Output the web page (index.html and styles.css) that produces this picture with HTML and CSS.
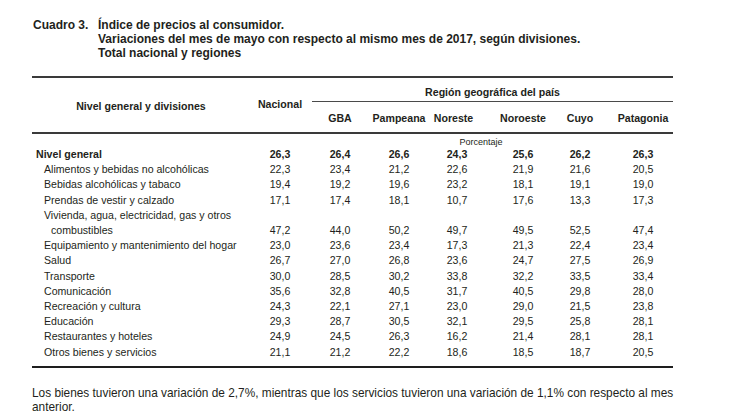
FILE: index.html
```html
<!DOCTYPE html>
<html lang="es">
<head>
<meta charset="utf-8">
<title>Cuadro 3</title>
<link rel="stylesheet" href="styles.css">
</head>
<body>
<div class="page">
  <div class="title">
    <div class="title-num">Cuadro 3.</div>
    <div class="title-lines">
      <div>Índice de precios al consumidor.</div>
      <div>Variaciones del mes de mayo con respecto al mismo mes de 2017, según divisiones.</div>
      <div>Total nacional y regiones</div>
    </div>
  </div>

  <div class="table">
    <div class="head">
      <div class="h-label">Nivel general y divisiones</div>
      <div class="h-nac">Nacional</div>
      <div class="h-region">Región geográfica del país</div>
      <div class="h-rule"></div>
      <div class="h-col">GBA</div>
      <div class="h-col">Pampeana</div>
      <div class="h-col h-nor">Noreste</div>
      <div class="h-col">Noroeste</div>
      <div class="h-col">Cuyo</div>
      <div class="h-col h-pat">Patagonia</div>
    </div>

    <div class="body">
      <div class="unit">Porcentaje</div>

      <div class="row total"><div class="lab">Nivel general</div><div>26,3</div><div>26,4</div><div>26,6</div><div>24,3</div><div>25,6</div><div>26,2</div><div class="pat">26,3</div></div>
      <div class="row"><div class="lab">Alimentos y bebidas no alcohólicas</div><div>22,3</div><div>23,4</div><div>21,2</div><div>22,6</div><div>21,9</div><div>21,6</div><div class="pat">20,5</div></div>
      <div class="row"><div class="lab">Bebidas alcohólicas y tabaco</div><div>19,4</div><div>19,2</div><div>19,6</div><div>23,2</div><div>18,1</div><div>19,1</div><div class="pat">19,0</div></div>
      <div class="row"><div class="lab">Prendas de vestir y calzado</div><div>17,1</div><div>17,4</div><div>18,1</div><div>10,7</div><div>17,6</div><div>13,3</div><div class="pat">17,3</div></div>
      <div class="row"><div class="lab"><span class="line">Vivienda, agua, electricidad, gas y otros</span><span class="line cont">combustibles</span></div><div>47,2</div><div>44,0</div><div>50,2</div><div>49,7</div><div>49,5</div><div>52,5</div><div class="pat">47,4</div></div>
      <div class="row"><div class="lab">Equipamiento y mantenimiento del hogar</div><div>23,0</div><div>23,6</div><div>23,4</div><div>17,3</div><div>21,3</div><div>22,4</div><div class="pat">23,4</div></div>
      <div class="row"><div class="lab">Salud</div><div>26,7</div><div>27,0</div><div>26,8</div><div>23,6</div><div>24,7</div><div>27,5</div><div class="pat">26,9</div></div>
      <div class="row"><div class="lab">Transporte</div><div>30,0</div><div>28,5</div><div>30,2</div><div>33,8</div><div>32,2</div><div>33,5</div><div class="pat">33,4</div></div>
      <div class="row"><div class="lab">Comunicación</div><div>35,6</div><div>32,8</div><div>40,5</div><div>31,7</div><div>40,5</div><div>29,8</div><div class="pat">28,0</div></div>
      <div class="row"><div class="lab">Recreación y cultura</div><div>24,3</div><div>22,1</div><div>27,1</div><div>23,0</div><div>29,0</div><div>21,5</div><div class="pat">23,8</div></div>
      <div class="row"><div class="lab">Educación</div><div>29,3</div><div>28,7</div><div>30,5</div><div>32,1</div><div>29,5</div><div>25,8</div><div class="pat">28,1</div></div>
      <div class="row"><div class="lab">Restaurantes y hoteles</div><div>24,9</div><div>24,5</div><div>26,3</div><div>16,2</div><div>21,4</div><div>28,1</div><div class="pat">28,1</div></div>
      <div class="row"><div class="lab">Otros bienes y servicios</div><div>21,1</div><div>21,2</div><div>22,2</div><div>18,6</div><div>18,5</div><div>18,7</div><div class="pat">20,5</div></div>
    </div>
  </div>

  <p class="note">Los bienes tuvieron una variación de 2,7%, mientras que los servicios tuvieron una variación de 1,1% con respecto al mes<br>anterior.</p>
</div>
</body>
</html>
```

FILE: styles.css
```css
html, body {
  margin: 0;
  padding: 0;
  background: #ffffff;
}

body {
  font-family: "Liberation Sans", Arial, Helvetica, sans-serif;
  color: #231f20;
}

.page {
  padding: 18px 0 0 32px;
  width: 641px;
}

.title {
  display: flex;
  font-weight: bold;
  font-size: 12px;
  line-height: 14px;
}

.title-num {
  width: 65px;
  padding-left: 1px;
}

.table {
  margin-top: 16px;
  border-top: 2px solid #3a3a3a;
  border-bottom: 2px solid #1e1e1e;
}

.head,
.row {
  display: grid;
  grid-template-columns: 218px 60px 60px 58px 58px 74px 40px 73px;
}

.head {
  grid-template-rows: 23px 1px 30px;
  font-size: 10.6px;
  font-weight: bold;
  line-height: 13px;
  border-bottom: 2px solid #3a3a3a;
}

.h-label {
  grid-column: 1;
  grid-row: 1 / 4;
  text-align: center;
  padding-top: 22px;
}

.h-nac {
  grid-column: 2;
  grid-row: 1 / 4;
  text-align: center;
  padding-top: 20px;
}

.h-region {
  grid-column: 3 / 9;
  grid-row: 1;
  text-align: center;
  padding-top: 8px;
  padding-left: 2px;
}

.h-rule {
  grid-column: 3 / 9;
  grid-row: 2;
  margin-left: 2px;
  background: #4a4a4a;
}

.h-col {
  grid-row: 3;
  text-align: center;
  padding-top: 10px;
}

.h-nor {
  padding-right: 7px;
}

.h-pat,
.pat {
  padding-left: 13px;
}

.body {
  padding-bottom: 6px;
  font-size: 10.6px;
}

.unit {
  font-size: 9px;
  line-height: 10px;
  padding-top: 3px;
  padding-left: 409px;
  width: 80px;
  text-align: center;
}

.row {
  line-height: 15.2px;
  align-items: end;
}

.row > div {
  text-align: center;
}

.row > .lab {
  text-align: left;
  padding-left: 12px;
}

.line {
  display: block;
  white-space: nowrap;
}

.line.cont {
  padding-left: 7px;
}

.row.total {
  font-weight: bold;
}

.row.total > .lab {
  padding-left: 4px;
}

.note {
  margin: 18px 0 0 0;
  width: 700px;
  font-size: 11.85px;
  line-height: 14.5px;
  white-space: nowrap;
}
```
